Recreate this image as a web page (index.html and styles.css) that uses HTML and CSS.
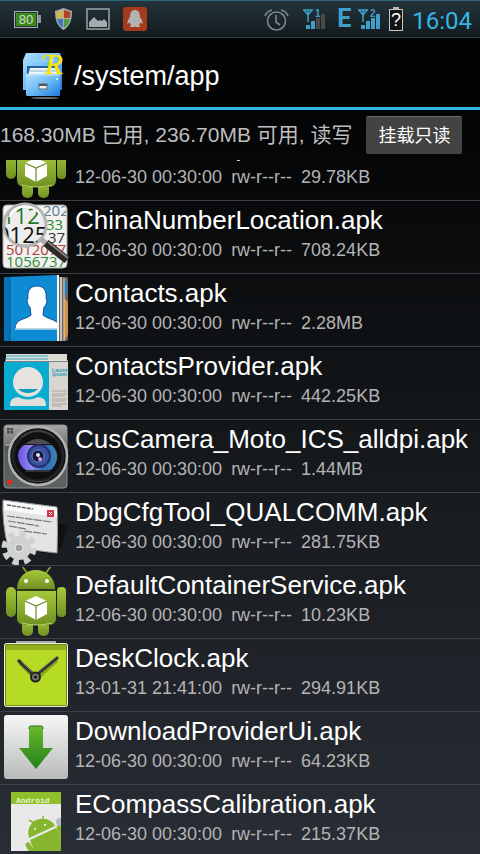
FILE: index.html
```html
<!DOCTYPE html>
<html lang="zh-CN">
<head>
    <meta charset="utf-8">
    <meta name="viewport" content="width=device-width, initial-scale=1.0">
    <title>/system/app</title>
    <link rel="stylesheet" href="styles.css">
</head>
<body>
    <!-- gradients and shapes shared by several icons -->
    <svg class="defs" width="0" height="0" aria-hidden="true">
        <defs>
            <linearGradient id="droidGreen" x1="0" y1="0" x2="0" y2="1">
                <stop offset="0" stop-color="#a6c83a"/>
                <stop offset="1" stop-color="#6f9022"/>
            </linearGradient>
            <linearGradient id="plate" x1="0" y1="0" x2="0" y2="1">
                <stop offset="0" stop-color="#f6f6f6"/>
                <stop offset="1" stop-color="#b9bbbb"/>
            </linearGradient>
            <linearGradient id="arrow" x1="0" y1="0" x2="0" y2="1">
                <stop offset="0" stop-color="#6cb82c"/>
                <stop offset="1" stop-color="#22801c"/>
            </linearGradient>
            <linearGradient id="blueCab" x1="0" y1="0" x2="1" y2="1">
                <stop offset="0" stop-color="#b5e0ff"/>
                <stop offset="0.5" stop-color="#6dbbf8"/>
                <stop offset="1" stop-color="#1f7bd8"/>
            </linearGradient>
            <linearGradient id="metal" x1="0" y1="0" x2="0" y2="1">
                <stop offset="0" stop-color="#a8a8a8"/>
                <stop offset="0.3" stop-color="#777"/>
                <stop offset="0.32" stop-color="#4e5656"/>
                <stop offset="1" stop-color="#5c6464"/>
            </linearGradient>
            <linearGradient id="lens" x1="0" y1="0" x2="1" y2="0">
                <stop offset="0" stop-color="#6a4fe0"/>
                <stop offset="0.35" stop-color="#8f8cf0"/>
                <stop offset="0.65" stop-color="#2e6ec0"/>
                <stop offset="1" stop-color="#3f80b0"/>
            </linearGradient>
            <clipPath id="numClip"><rect x="4" y="5" width="62" height="61" rx="3"/></clipPath>
            <clipPath id="glassClip"><circle cx="25" cy="25" r="20"/></clipPath>
            <clipPath id="bookClip"><rect x="10" y="6" width="47" height="49"/></clipPath>
            <clipPath id="compassClip"><rect x="11" y="7" width="50" height="59"/></clipPath>
            <symbol id="droid" viewBox="0 0 72 72">
                <path d="M23 1.500 L28 8 M50 1.500 L45 8" stroke="#8fb02c" stroke-width="1.500" stroke-linecap="round"/>
                <rect x="22" y="52" width="11" height="18" rx="5" fill="url(#droidGreen)"/>
                <rect x="38" y="52" width="11" height="18" rx="5" fill="url(#droidGreen)"/>
                <rect x="6" y="21" width="10" height="30" rx="5" fill="url(#droidGreen)"/>
                <rect x="57" y="21" width="9" height="30" rx="4" fill="url(#droidGreen)"/>
                <path d="M17 23 C17 12 25 4 36 4 S55 12 55 23 Z" fill="url(#droidGreen)"/>
                <path d="M17 25 H56 V52 Q56 59 49 59 H25 Q17 59 17 52 Z" fill="url(#droidGreen)"/>
                <path d="M17 24 H56" stroke="#3d5213" stroke-width="1"/>
                <path d="M22 57 Q36 61 52 57" stroke="#b7d16a" stroke-width="1" fill="none"/>
                <circle cx="26" cy="15" r="2" fill="#fff"/><circle cx="47" cy="15" r="2" fill="#fff"/>
                <path d="M36 30 L47 35 V48 L36 54 L25 48 V35 Z" fill="#fff"/>
                <path d="M25 35 L36 40 L47 35 M36 40 V54" stroke="#6f8b28" stroke-width="1.200" fill="none"/>
            </symbol>
            <symbol id="antenna" viewBox="0 0 22 22">
                <path d="M0 2 H10 M1 2 L5 7 L9 2 M5 2 V14" stroke="#3f9fc9" stroke-width="1.500" fill="none"/>
            </symbol>
        </defs>
    </svg>

    <div class="status-bar">
        <div class="status-left">
            <svg width="27" height="18" viewBox="0 0 27 18">
                <rect x="24" y="5" width="3" height="8" fill="#8b9498"/>
                <rect x="0.500" y="1.500" width="23" height="16" fill="#2a3335" stroke="#a3abad"/>
                <rect x="2" y="3" width="20" height="13" fill="#3c8a1e"/>
                <text class="battery-text" x="12" y="14" text-anchor="middle">80</text>
            </svg>
            <svg width="19" height="24" viewBox="0 0 19 24">
                <path d="M9.500 1 L18 4 C18 13 16 19 9.500 23 C3 19 1 13 1 4 Z" fill="#a9adae"/>
                <path d="M9 3 V11 H3 Q2.500 8 2.500 5 Z" fill="#d3b24c"/>
                <path d="M10 3 L16.500 5 Q16.500 8 16 11 H10 Z" fill="#b8412c"/>
                <path d="M3 12 H9 V21 Q4.500 18 3 12" fill="#3a79bd"/>
                <path d="M10 12 H16 Q14.500 18 10 21 Z" fill="#4f9b3b"/>
            </svg>
            <svg width="24" height="24" viewBox="0 0 24 24">
                <rect x="1" y="2" width="22" height="20" fill="none" stroke="#9ba3a6" stroke-width="1.500"/>
                <path d="M3 20 V15 L8 10 L12 14 L14 13 L16 14 L18 12 L21 15 V20 Z" fill="#a3abad"/>
            </svg>
            <svg width="24" height="24" viewBox="0 0 24 24">
                <rect width="24" height="24" rx="3" fill="#a53a1c"/>
                <path d="M12 3 C7.500 3 7 7 7 10 C5 13 4 15 4.500 17 L6.500 15.500 L8 18 L6.500 20 H11 L12 19.500 L13 20 H17.500 L16 18 L17.500 15.500 L19.500 17 C20 15 19 13 17 10 C17 7 16.500 3 12 3" fill="#b3b3b1"/>
            </svg>
        </div>
        <div class="status-right">
            <svg width="30" height="24" viewBox="0 0 30 24">
                <circle cx="12.500" cy="14" r="9" fill="none" stroke="#7c878a" stroke-width="1.600"/>
                <path d="M12 8 V15 L16 18" fill="none" stroke="#7c878a" stroke-width="1.600"/>
                <path d="M1 9 Q3 4 8 3 M17 3 Q22 4 24 9" fill="none" stroke="#7c878a" stroke-width="1.600"/>
            </svg>
            <svg width="25" height="22" viewBox="0 0 25 22">
                <use href="#antenna" width="22" height="22"/>
                <text class="sim" x="12" y="9">1</text>
                <path d="M3 17 H7 V21 H3 Z M8 13 H12 V21 H8 Z" fill="#3f9fc9"/>
                <path d="M13 10 H17 V21 H13 Z M18 6 H22 V21 H18 Z" fill="#4a4846"/>
            </svg>
            <span class="network">E</span>
            <svg width="22" height="22" viewBox="0 0 22 22">
                <use href="#antenna" width="22" height="22"/>
                <text class="sim" x="12" y="9">2</text>
                <path d="M3 17 H7 V21 H3 Z M8 13 H12 V21 H8 Z M13 10 H17 V21 H13 Z M18 6 H22 V21 H18 Z" fill="#3f9fc9"/>
            </svg>
            <svg width="14" height="24" viewBox="0 0 14 24">
                <rect x="4" y="0" width="6" height="2" fill="#b5b5b5"/>
                <rect x="0.500" y="2.500" width="13" height="21" fill="#131313" stroke="#c4c4c4"/>
                <text class="unknown" x="7" y="19" text-anchor="middle">?</text>
            </svg>
            <time class="clock">16:04</time>
        </div>
    </div>

    <header>
        <svg class="logo" width="44" height="48" viewBox="0 0 44 48">
            <ellipse cx="22" cy="46" rx="14" ry="1" fill="#6a6f75"/>
            <path d="M3 1 H37 L39 8 V38 H0 V8 Z" fill="url(#blueCab)"/>
            <path d="M1 9 H39" stroke="#9fd4ff"/>
            <path d="M4 14 H36 V23 H4 Z" fill="#275f9e"/>
            <path d="M7 16 H34 L37 23 H5 Z" fill="#e9f4fd"/>
            <path d="M6 19 H34" stroke="#8fb9dc"/>
            <path d="M3 22 H37 V44 H4 Q3 44 3 42 Z" fill="url(#blueCab)"/>
            <path d="M3 23 H37" stroke="#c9e8ff"/>
            <rect x="16" y="32" width="8" height="5" fill="#f2f2f2" stroke="#5d6c77"/>
            <path d="M16 33 H24" stroke="#555" stroke-width="2"/>
            <circle cx="34" cy="27" r="1" fill="#e9f4fd"/>
            <path d="M20 8 Q19 5 24 3" fill="none" stroke="#f7e600" stroke-width="1.500"/>
            <text class="logo-r" x="22" y="22">R</text>
        </svg>
        <h1>/system/app</h1>
    </header>

    <div class="info-bar">
        <span class="usage">168.30MB 已用, 236.70MB 可用, 读写</span>
        <button class="mount" type="button">挂载只读</button>
    </div>

    <ul class="files" id="files">
        <li class="file">
            <svg class="icon" viewBox="0 0 72 72"><use href="#droid"/></svg>
            <div class="text">
                <a class="name" href="#">CertInstaller.apk</a>
                <div class="meta"><span>12-06-30 00:30:00</span><span>rw-r--r--</span><span>29.78KB</span></div>
            </div>
        </li>
        <li class="file">
            <svg class="icon" viewBox="0 0 72 72">
                <rect x="3" y="4" width="64" height="63" rx="4" fill="#f1f1ef" stroke="#a9a9a9"/>
                <g class="digits" clip-path="url(#numClip)">
                    <text x="43" y="15" fill="#587c96">202</text>
                    <text x="46" y="29" fill="#2f8a35">33</text>
                    <text x="48" y="42" fill="#333">37</text>
                    <text x="6" y="54" fill="#b23b3b">5012077</text>
                    <text x="6" y="66" fill="#2f8a35">1056737</text>
                </g>
                <circle cx="25" cy="24" r="21" fill="#ededed" stroke="#b3b5b5" stroke-width="3"/>
                <g class="digits-big" clip-path="url(#glassClip)">
                    <text x="2" y="23" fill="#21782a">112</text>
                    <text x="-3" y="42" fill="#111">0125</text>
                </g>
                <path d="M9 16 A18 18 0 0 1 40 13" fill="none" stroke="#fff" stroke-width="2"/>
                <path d="M41 38 L48 44" stroke="#aaa" stroke-width="5"/>
                <path d="M46 42 L67 59" stroke="#2b2724" stroke-width="8"/>
                <path d="M48 41 L68 57" stroke="#8a8178" stroke-width="2"/>
            </svg>
            <div class="text">
                <a class="name" href="#">ChinaNumberLocation.apk</a>
                <div class="meta"><span>12-06-30 00:30:00</span><span>rw-r--r--</span><span>708.24KB</span></div>
            </div>
        </li>
        <li class="file">
            <svg class="icon" viewBox="0 0 72 72">
                <path d="M57 3 H66 Q68 3 68 6 V65 Q68 67 66 67 H57 Z" fill="#6e6760"/>
                <path d="M64 5 L67 9 V22 L64 18 Z" fill="#1f83c4"/>
                <path d="M64 24 L68 28 V60 L64 67 Z" fill="#cf9345"/>
                <path d="M4 5 Q4 3 6 3 L58 1 V67 H6 Q4 67 4 65 Z" fill="#0d8bd3"/>
                <path d="M4 5 Q4 3 6 3 H10 V67 H6 Q4 67 4 65 Z" fill="#0872b7"/>
                <path d="M10 3 V67" stroke="#065b98"/>
                <path d="M58 1 V67" stroke="#f4f4f4" stroke-width="2"/>
                <path d="M61 3 V67" stroke="#c9c2bb" stroke-width="2"/>
                <path d="M64 4 V67" stroke="#ded8d0"/>
                <g clip-path="url(#bookClip)">
                    <path d="M37 12 C30 12 27 17 28 25 C26 26 28 32 30 33 L31 41 C26 46 15 44 15 55 H60 C60 45 48 46 43 41 L44 33 C46 32 48 26 46 25 C47 17 44 12 37 12" fill="#fff" stroke="#1b4a9a" stroke-width="1"/>
                </g>
                <path d="M15 55 H57" stroke="#fff"/>
            </svg>
            <div class="text">
                <a class="name" href="#">Contacts.apk</a>
                <div class="meta"><span>12-06-30 00:30:00</span><span>rw-r--r--</span><span>2.28MB</span></div>
            </div>
        </li>
        <li class="file">
            <svg class="icon" viewBox="0 0 72 72">
                <rect x="6" y="7" width="61" height="7" fill="#dedbd6"/>
                <path d="M6 9 H48 M5 12 H48" stroke="#39a9bd"/>
                <rect x="4" y="15" width="64" height="48" fill="#d9d6d1"/>
                <rect x="4" y="15" width="45" height="48" fill="#08acd0"/>
                <path d="M5 14 H68" stroke="#f1efec"/>
                <circle cx="28" cy="35" r="15" fill="#e6e3df"/>
                <path d="M18 42 H38 Q34 46 28 46 T18 42" fill="#0a9dc0"/>
                <path d="M10 59 Q9 51 18 50 Q28 55 38 50 Q47 51 46 59 Z" fill="#e2dfdb"/>
                <text class="lorem" x="52" y="25">Lauren</text>
                <text class="lorem" x="52" y="29">Ipsum</text>
                <path d="M52 44 H67 M52 47 H67 M52 49 H65 M52 52 H67 M52 54 H66 M52 57 H67 M52 59 H62" stroke="#96928e" stroke-width="0.700"/>
            </svg>
            <div class="text">
                <a class="name" href="#">ContactsProvider.apk</a>
                <div class="meta"><span>12-06-30 00:30:00</span><span>rw-r--r--</span><span>442.25KB</span></div>
            </div>
        </li>
        <li class="file">
            <svg class="icon" viewBox="0 0 72 72">
                <rect x="4" y="5" width="63" height="63" rx="3" fill="url(#metal)" stroke="#8b8f8f"/>
                <path d="M7 9 H13 M7 12 H13 M8 8 V14 M12 8 V14" stroke="#333"/>
                <path d="M5 25 H12" stroke="#c5c5c5"/>
                <circle cx="38" cy="36" r="29" fill="#101012" stroke="#b2b2b2" stroke-width="2.500"/>
                <circle cx="38" cy="36" r="25" fill="none" stroke="#222224" stroke-width="3"/>
                <path d="M22 17 Q38 5 54 17" fill="none" stroke="#66666a" stroke-width="1.500" stroke-dasharray="1 1"/>
                <path d="M28 60 Q38 63 49 60" fill="none" stroke="#77777a" stroke-dasharray="1 1"/>
                <path d="M25 24 Q38 14 51 24 Z" fill="#4d4c51"/>
                <path d="M24 25 H52 Q58 31 57 39 Q55 48 50 50 H26 Q19 46 18 36 Q18 29 24 25" fill="url(#lens)"/>
                <circle cx="39" cy="36" r="11" fill="#3c50a0" stroke="#27306c" stroke-width="2"/>
                <circle cx="38" cy="36" r="6" fill="#131736" stroke="#717fc7"/>
                <circle cx="38" cy="35" r="2" fill="#d9e5f5"/>
                <circle cx="40" cy="39" r="2" fill="#dc9be8"/>
                <path d="M26 51 H50" stroke="#55545a"/>
                <circle cx="9.500" cy="62" r="2.500" fill="#f0201c"/>
            </svg>
            <div class="text">
                <a class="name" href="#">CusCamera_Moto_ICS_alldpi.apk</a>
                <div class="meta"><span>12-06-30 00:30:00</span><span>rw-r--r--</span><span>1.44MB</span></div>
            </div>
        </li>
        <li class="file">
            <svg class="icon" viewBox="0 0 72 72">
                <path d="M57 30 L68 32 L61 56 L40 60 Z" fill="#0e1115"/>
                <path d="M3 7 L57 14 Q58 37 57 60 L8 54 Q2 30 3 7" fill="#e4e4e4" stroke="#9a9a9a"/>
                <path d="M4 8 L57 15 V24 L4 17 Z" fill="#fafafa"/>
                <path d="M7 12 L33 16" stroke="#666" stroke-width="1.500" stroke-dasharray="4 1"/>
                <rect x="47" y="17" width="7" height="7" fill="#d73548"/>
                <path d="M49 19 L52 22 M52 19 L49 22" stroke="#fff"/>
                <path d="M7 23 L52 29 M8 28 L39 33 M9 33 L26 36 M24 38 L47 41" stroke="#777" stroke-width="1.200" stroke-dasharray="8 1"/>
                <circle cx="19" cy="55" r="12" fill="#d0d2d2"/>
                <circle cx="19" cy="55" r="14" fill="none" stroke="#d0d2d2" stroke-width="7" stroke-dasharray="6 5"/>
                <circle cx="19" cy="55" r="4" fill="#a0a3a3" stroke="#eee"/>
            </svg>
            <div class="text">
                <a class="name" href="#">DbgCfgTool_QUALCOMM.apk</a>
                <div class="meta"><span>12-06-30 00:30:00</span><span>rw-r--r--</span><span>281.75KB</span></div>
            </div>
        </li>
        <li class="file">
            <svg class="icon" viewBox="0 0 72 72"><use href="#droid"/></svg>
            <div class="text">
                <a class="name" href="#">DefaultContainerService.apk</a>
                <div class="meta"><span>12-06-30 00:30:00</span><span>rw-r--r--</span><span>10.23KB</span></div>
            </div>
        </li>
        <li class="file">
            <svg class="icon" viewBox="0 0 72 72">
                <rect x="16" y="2" width="40" height="2" fill="#a9acae"/>
                <rect x="4.500" y="4.500" width="63" height="63" rx="2" fill="#b6db25" stroke="#f0f4df"/>
                <rect x="5.500" y="5.500" width="61" height="61" rx="1" fill="none" stroke="#6f8a17"/>
                <rect x="6" y="6" width="60" height="5" fill="#93ae20"/>
                <path d="M20 24 L36 40 L57 21" fill="none" stroke="#8ba61c" stroke-width="4"/>
                <path d="M19 22 L35 37" stroke="#33352f" stroke-width="3.500" stroke-linecap="round"/>
                <path d="M35 37 L57 19" stroke="#33352f" stroke-width="3" stroke-linecap="round"/>
                <path d="M22 23 L34 35 M38 33 L56 18" stroke="#8b8d87" stroke-width="0.700"/>
                <circle cx="35.500" cy="38" r="4.500" fill="#73756f" stroke="#20211e" stroke-width="2"/>
                <circle cx="35.500" cy="38" r="1.500" fill="#111"/>
            </svg>
            <div class="text">
                <a class="name" href="#">DeskClock.apk</a>
                <div class="meta"><span>13-01-31 21:41:00</span><span>rw-r--r--</span><span>294.91KB</span></div>
            </div>
        </li>
        <li class="file">
            <svg class="icon" viewBox="0 0 72 72">
                <rect x="4" y="3" width="64" height="64" rx="3" fill="url(#plate)"/>
                <path d="M31 14 H41 Q43 14 43 16 V36 H53 L36 57 L19 36 H29 V16 Q29 14 31 14" fill="url(#arrow)"/>
                <path d="M29 17 V16 Q29 14 31 14 H41 Q43 14 43 16 V17" fill="none" stroke="#327321"/>
            </svg>
            <div class="text">
                <a class="name" href="#">DownloadProviderUi.apk</a>
                <div class="meta"><span>12-06-30 00:30:00</span><span>rw-r--r--</span><span>64.23KB</span></div>
            </div>
        </li>
        <li class="file">
            <svg class="icon" viewBox="0 0 72 72">
                <rect x="11" y="7" width="50" height="59" fill="#e9e9e9"/>
                <rect x="11" y="7" width="50" height="12" fill="#8fc02c"/>
                <text class="brand" x="16" y="18">Android</text>
                <g clip-path="url(#compassClip)">
                    <circle cx="60" cy="37" r="4" fill="#b5b9bb"/>
                    <path d="M29 53 C26 43 32 35 40 34 C48 33 53 37 55 41 Z" fill="#86b52e"/>
                    <path d="M34 38 L29 35 M43 35 L43 31" stroke="#86b52e" stroke-width="1.500"/>
                    <circle cx="35" cy="44" r="1" fill="#fff"/><circle cx="45" cy="40" r="1" fill="#fff"/>
                    <path d="M30 55 L56 43 L68 66 H34 Z" fill="#86b52e"/>
                    <path d="M28 60 L34 70" stroke="#86b52e" stroke-width="5" stroke-linecap="round"/>
                    <path d="M59 43 L64 53" stroke="#86b52e" stroke-width="5" stroke-linecap="round"/>
                </g>
            </svg>
            <div class="text">
                <a class="name" href="#">ECompassCalibration.apk</a>
                <div class="meta"><span>12-06-30 00:30:00</span><span>rw-r--r--</span><span>215.37KB</span></div>
            </div>
        </li>
    </ul>

    <script>
        document.getElementById('files').scrollTop = 32;
    </script>
</body>
</html>
```
FILE: styles.css
```css
* {
    box-sizing: border-box;
}
body {
    margin: 0;
    height: 100vh;
    display: flex;
    flex-direction: column;
    overflow: hidden;
    font-family: "Liberation Sans", "Noto Sans CJK SC", sans-serif;
    color: white;
    background: linear-gradient(#000 0%, #030405 14%, #14171a 50%, #292d35 100%);
}
svg {
    display: block;
    flex: none;
}
.defs {
    position: absolute;
}

/* status bar */
.status-bar {
    flex: none;
    height: 38px;
    padding: 0 8px 0 14px;
    display: flex;
    justify-content: space-between;
    align-items: center;
    background: linear-gradient(#24343c, #131a1e);
    border-top: 1px solid #2c6478;
    border-bottom: 1px solid #24434d;
}
.status-left {
    display: flex;
    align-items: center;
    gap: 13px;
}
.status-right {
    display: flex;
    align-items: center;
    gap: 9px;
}
.battery-text {
    font-size: 13px;
    fill: #cfdccb;
}
.sim {
    font-size: 10px;
    font-weight: bold;
    fill: #3f9fc9;
}
.network {
    width: 12px;
    font-family: Roboto, sans-serif;
    font-size: 25px;
    font-weight: bold;
    line-height: 36px;
    color: #3f9fc9;
}
.unknown {
    font-size: 18px;
    fill: white;
}
.clock {
    font-family: Roboto, sans-serif;
    font-size: 24px;
    line-height: 36px;
    color: #33b5e5;
    padding-top: 3px;
}

/* title */
header {
    flex: none;
    height: 72px;
    padding: 6px 23px 0;
    display: flex;
    align-items: center;
    gap: 7px;
    border-bottom: 3px solid #33b5e5;
}
h1 {
    margin: 0;
    font-size: 27px;
    font-weight: normal;
    line-height: 32px;
}
.logo-r {
    font-family: "Liberation Serif", serif;
    font-size: 29px;
    font-style: italic;
    fill: #f7e600;
    stroke: #f7e600;
    stroke-width: 0.6px;
}

/* disk usage */
.info-bar {
    flex: none;
    height: 50px;
    display: flex;
    align-items: center;
    gap: 14px;
}
.usage {
    font-size: 21px;
    line-height: 30px;
    color: #bebebe;
    white-space: nowrap;
}
.mount {
    height: 38px;
    padding: 0 12px 4px;
    border: 0;
    border-top: 1px solid #6a6a6a;
    border-radius: 2px;
    background: #434343;
    color: white;
    font-family: "Noto Sans CJK SC", sans-serif;
    font-size: 18px;
    line-height: 28px;
    white-space: nowrap;
}

/* file list */
.files {
    flex: 1;
    min-height: 0;
    margin: 0;
    padding: 0;
    list-style: none;
    overflow-y: auto;
    scrollbar-width: none;
}
.file {
    display: flex;
    gap: 3px;
    height: 73px;
    border-bottom: 1px solid #3d4044;
}
.icon {
    width: 72px;
    height: 72px;
}
.text {
    flex: 1;
    min-width: 0;
    padding-top: 3px;
}
.name {
    display: block;
    color: white;
    text-decoration: none;
    font-size: 26px;
    line-height: 32px;
    white-space: nowrap;
}
.meta {
    display: flex;
    gap: 9px;
    font-size: 18px;
    line-height: 28px;
    color: #b4b4b4;
    white-space: nowrap;
}

/* lettering inside icons */
.digits {
    font-family: "Open Sans", sans-serif;
    font-size: 15px;
}
.digits-big {
    font-family: "Open Sans", sans-serif;
    font-size: 22px;
}
.lorem {
    font-size: 5px;
    font-weight: bold;
    fill: #2a9db5;
}
.brand {
    font-family: "Liberation Mono", monospace;
    font-size: 8px;
    font-weight: bold;
    fill: #e6f3c8;
}
```
